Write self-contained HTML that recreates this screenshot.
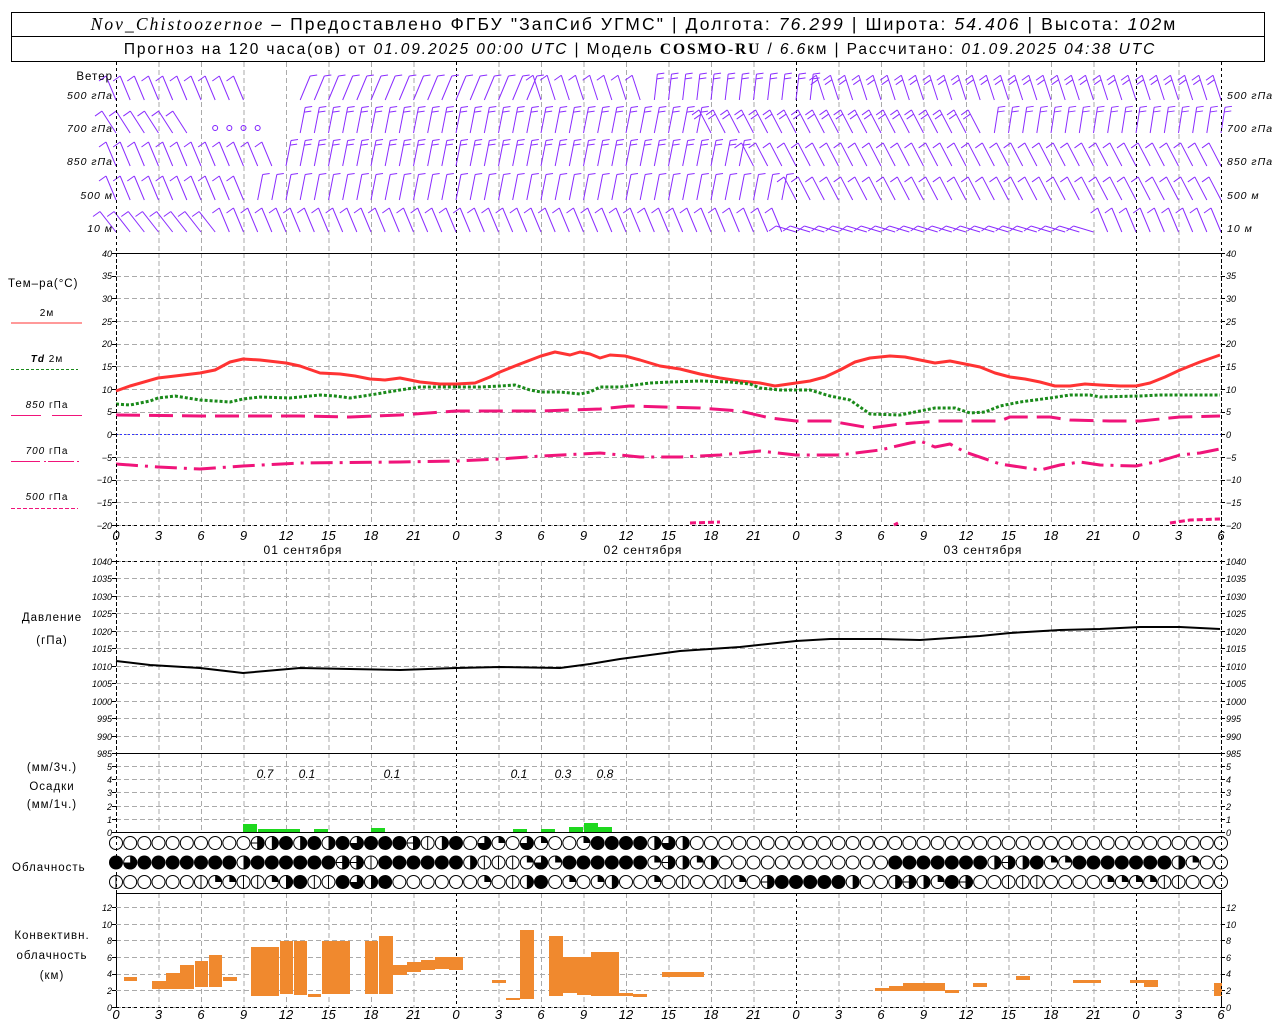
<!DOCTYPE html>
<html><head><meta charset="utf-8"><style>
body{margin:0;background:#fff;width:1280px;height:1024px;overflow:hidden}
svg{display:block}
text{font-family:"Liberation Sans",sans-serif;fill:#000}
.t{font-size:10px;font-style:italic}
.l{font-size:11.5px;letter-spacing:1px}
</style></head><body>
<svg id="s" width="1280" height="1024" xmlns="http://www.w3.org/2000/svg">
<rect x="11.5" y="12.5" width="1253" height="49" fill="none" stroke="#000"/>
<line x1="11" y1="36.5" x2="1265" y2="36.5" stroke="#000"/>
<text x="634" y="30" text-anchor="middle" style="font-size:17.5px;letter-spacing:2.1px"><tspan font-style="italic" font-family="Liberation Serif">Nov_Chistoozernoe</tspan> – Предоставлено ФГБУ "ЗапСиб УГМС" | Долгота: <tspan font-style="italic">76.299</tspan> | Широта: <tspan font-style="italic">54.406</tspan> | Высота: <tspan font-style="italic">102</tspan>м</text>
<text x="640" y="54" text-anchor="middle" style="font-size:15.5px;letter-spacing:1.9px">Прогноз на 120 часа(ов) от <tspan font-style="italic">01.09.2025 00:00 UTC</tspan> | Модель <tspan font-weight="bold" font-family="Liberation Serif">COSMO-RU</tspan> / <tspan font-style="italic">6.6</tspan>км | Рассчитано: <tspan font-style="italic">01.09.2025 04:38 UTC</tspan></text>
<g id="g"></g>
<g class="l">
<text x="113" y="80" text-anchor="end">Ветер</text>
<text x="113" y="99" text-anchor="end" class="t" style="font-size:10.5px">500 гПа</text>
<text x="113" y="132" text-anchor="end" class="t" style="font-size:10.5px">700 гПа</text>
<text x="113" y="165" text-anchor="end" class="t" style="font-size:10.5px">850 гПа</text>
<text x="113" y="199" text-anchor="end" class="t" style="font-size:10.5px">500 м</text>
<text x="113" y="232" text-anchor="end" class="t" style="font-size:10.5px">10  м</text>
<text x="1227" y="99" class="t" style="font-size:10.5px">500 гПа</text>
<text x="1227" y="132" class="t" style="font-size:10.5px">700 гПа</text>
<text x="1227" y="165" class="t" style="font-size:10.5px">850 гПа</text>
<text x="1227" y="199" class="t" style="font-size:10.5px">500 м</text>
<text x="1227" y="232" class="t" style="font-size:10.5px">10  м</text>
<text x="8" y="287">Тем–ра(°С)</text>
<text x="47" y="316" text-anchor="middle" style="font-size:10px">2м</text>
<text x="47" y="362" text-anchor="middle" style="font-size:10px"><tspan font-style="italic" font-weight="bold">Td</tspan>  2м</text>
<text x="47" y="408" text-anchor="middle" style="font-size:10px"><tspan font-style="italic">850</tspan> гПа</text>
<text x="47" y="454" text-anchor="middle" style="font-size:10px"><tspan font-style="italic">700</tspan> гПа</text>
<text x="47" y="500" text-anchor="middle" style="font-size:10px"><tspan font-style="italic">500</tspan> гПа</text>
<text x="52" y="621" text-anchor="middle">Давление</text>
<text x="52" y="644" text-anchor="middle">(гПа)</text>
<text x="52" y="771" text-anchor="middle">(мм/3ч.)</text>
<text x="52" y="790" text-anchor="middle">Осадки</text>
<text x="52" y="808" text-anchor="middle">(мм/1ч.)</text>
<text x="12" y="871">Облачность</text>
<text x="52" y="939" text-anchor="middle">Конвективн.</text>
<text x="52" y="959" text-anchor="middle">облачность</text>
<text x="52" y="979" text-anchor="middle">(км)</text>
<text x="303" y="554" text-anchor="middle" style="font-size:12px">01 сентября</text>
<text x="643" y="554" text-anchor="middle" style="font-size:12px">02 сентября</text>
<text x="983" y="554" text-anchor="middle" style="font-size:12px">03 сентября</text>
</g>
<g class="t" style="font-size:13px" text-anchor="middle">
<text x="116" y="540">0</text><text x="158.5" y="540">3</text><text x="201" y="540">6</text><text x="243.5" y="540">9</text><text x="286" y="540">12</text><text x="328.5" y="540">15</text><text x="371" y="540">18</text><text x="413.5" y="540">21</text><text x="456" y="540">0</text><text x="498.5" y="540">3</text><text x="541" y="540">6</text><text x="583.5" y="540">9</text><text x="626" y="540">12</text><text x="668.5" y="540">15</text><text x="711" y="540">18</text><text x="753.5" y="540">21</text><text x="796" y="540">0</text><text x="838.5" y="540">3</text><text x="881" y="540">6</text><text x="923.5" y="540">9</text><text x="966" y="540">12</text><text x="1008.5" y="540">15</text><text x="1051" y="540">18</text><text x="1093.5" y="540">21</text><text x="1136" y="540">0</text><text x="1178.5" y="540">3</text><text x="1221" y="540">6</text>
<text x="116" y="1019">0</text><text x="158.5" y="1019">3</text><text x="201" y="1019">6</text><text x="243.5" y="1019">9</text><text x="286" y="1019">12</text><text x="328.5" y="1019">15</text><text x="371" y="1019">18</text><text x="413.5" y="1019">21</text><text x="456" y="1019">0</text><text x="498.5" y="1019">3</text><text x="541" y="1019">6</text><text x="583.5" y="1019">9</text><text x="626" y="1019">12</text><text x="668.5" y="1019">15</text><text x="711" y="1019">18</text><text x="753.5" y="1019">21</text><text x="796" y="1019">0</text><text x="838.5" y="1019">3</text><text x="881" y="1019">6</text><text x="923.5" y="1019">9</text><text x="966" y="1019">12</text><text x="1008.5" y="1019">15</text><text x="1051" y="1019">18</text><text x="1093.5" y="1019">21</text><text x="1136" y="1019">0</text><text x="1178.5" y="1019">3</text><text x="1221" y="1019">6</text>
</g>
<g class="t" text-anchor="end" style="font-size:9px">
<text x="112" y="257">40</text><text x="112" y="279">35</text><text x="112" y="302">30</text><text x="112" y="325">25</text><text x="112" y="347">20</text><text x="112" y="370">15</text><text x="112" y="393">10</text><text x="112" y="415">5</text><text x="112" y="438">0</text><text x="112" y="461">−5</text><text x="112" y="483">−10</text><text x="112" y="506">−15</text><text x="112" y="529">−20</text>
<text x="112" y="565">1040</text><text x="112" y="582">1035</text><text x="112" y="600">1030</text><text x="112" y="617">1025</text><text x="112" y="635">1020</text><text x="112" y="652">1015</text><text x="112" y="670">1010</text><text x="112" y="687">1005</text><text x="112" y="705">1000</text><text x="112" y="722">995</text><text x="112" y="740">990</text><text x="112" y="757">985</text>
<text x="112" y="770">5</text><text x="112" y="783">4</text><text x="112" y="796">3</text><text x="112" y="810">2</text><text x="112" y="823">1</text><text x="112" y="836">0</text>
<text x="112" y="911">12</text><text x="112" y="928">10</text><text x="112" y="944">8</text><text x="112" y="961">6</text><text x="112" y="977">4</text><text x="112" y="994">2</text><text x="112" y="1011">0</text>
</g>
<g class="t" style="font-size:9px">
<text x="1226" y="257">40</text><text x="1226" y="279">35</text><text x="1226" y="302">30</text><text x="1226" y="325">25</text><text x="1226" y="347">20</text><text x="1226" y="370">15</text><text x="1226" y="393">10</text><text x="1226" y="415">5</text><text x="1226" y="438">0</text><text x="1226" y="461">−5</text><text x="1226" y="483">−10</text><text x="1226" y="506">−15</text><text x="1226" y="529">−20</text>
<text x="1226" y="565">1040</text><text x="1226" y="582">1035</text><text x="1226" y="600">1030</text><text x="1226" y="617">1025</text><text x="1226" y="635">1020</text><text x="1226" y="652">1015</text><text x="1226" y="670">1010</text><text x="1226" y="687">1005</text><text x="1226" y="705">1000</text><text x="1226" y="722">995</text><text x="1226" y="740">990</text><text x="1226" y="757">985</text>
<text x="1226" y="770">5</text><text x="1226" y="783">4</text><text x="1226" y="796">3</text><text x="1226" y="810">2</text><text x="1226" y="823">1</text><text x="1226" y="836">0</text>
<text x="1226" y="911">12</text><text x="1226" y="928">10</text><text x="1226" y="944">8</text><text x="1226" y="961">6</text><text x="1226" y="977">4</text><text x="1226" y="994">2</text><text x="1226" y="1011">0</text>
</g>
<g class="t" style="font-size:12px" text-anchor="middle">
<text x="265" y="778">0.7</text><text x="307" y="778">0.1</text><text x="392" y="778">0.1</text><text x="519" y="778">0.1</text><text x="563" y="778">0.3</text><text x="605" y="778">0.8</text>
</g>
</svg>
<script>
var g=document.getElementById('g'),NS='http://www.w3.org/2000/svg';
function el(t,a){var e=document.createElementNS(NS,t);for(var k in a)e.setAttribute(k,a[k]);g.appendChild(e);return e}
function L(x1,y1,x2,y2,c,w,d){var a={x1:x1,y1:y1,x2:x2,y2:y2,stroke:c||'#000','stroke-width':w||1};if(d)a['stroke-dasharray']=d;el('line',a)}
var X0=116,P=340/24;
L(11,323,82,323,'#f33',1);L(11,369.5,78,369.5,'#1a8a1a',1,'3,2');L(11,415.5,41,415.5,'#f0147a',1);L(52,415.5,82,415.5,'#f0147a',1);
L(11,461.5,40,461.5,'#f0147a',1);L(44,461.5,46,461.5,'#f0147a',1);L(48,461.5,74,461.5,'#f0147a',1);L(77,461.5,79,461.5,'#f0147a',1);
L(11,508.5,78,508.5,'#f0147a',1,'4,2');
var panels=[[62,253],[253,525],[561,753],[753,832],[893,1007]];
for(var i=0;i<=26;i++){var x=X0+42.5*i+0.5,day=(i%8==0)||i==26;
 panels.forEach(function(p){L(x,p[0],x,p[1],day?'#000':'#aaa',1,day?'3,3':'5,3')});}
function hg(y0,y1,n){for(var k=0;k<=n;k++){var y=Math.round(y0+(y1-y0)*k/n)+0.5;L(116,y,1221,y,'#aaa',1,'5,3');L(112,y,116,y,'#000');L(1221,y,1225,y,'#000')}}
hg(253,525,12);hg(561,753,11);hg(766,832,5);hg(907,1007,6);
L(116,253.5,1221,253.5,'#000');L(116,561.5,1221,561.5,'#000',1,'3,3');L(116,753.5,1221,753.5,'#000');L(116,832.5,1221,832.5,'#000');L(116,893.5,1221,893.5,'#000');L(116,1007.5,1221,1007.5,'#000',1,'3,3');L(116,525.5,1221,525.5,'#000',1,'3,3');
L(116,434.5,1221,434.5,'#33f',1,'2,2');
function pl(pts,c,w,d){var s=pts.map(function(p){return p.join(',')}).join(' ');var a={points:s,fill:'none',stroke:c,'stroke-width':w,'stroke-linejoin':'round'};if(d)a['stroke-dasharray']=d;el('polyline',a)}
pl([[116,391],[130,386],[158,378],[175,376],[200,373],[215,370],[230,362],[243,359],[260,360],[286,363],[300,366],[320,373],[340,374],[355,376],[370,379],[385,380],[400,378],[420,382],[440,384],[456,384],[475,383],[490,377],[500,372],[520,364],[541,356],[555,352],[570,355],[580,352],[590,354],[600,358],[610,355],[625,356],[640,360],[660,366],[680,369],[700,374],[720,378],[740,381],[760,383],[775,386],[796,383],[810,381],[825,377],[840,370],[855,362],[870,358],[890,356],[905,357],[920,360],[935,363],[950,361],[965,364],[980,367],[995,373],[1010,377],[1025,379],[1040,382],[1055,386],[1070,386],[1085,384],[1100,385],[1120,386],[1136,386],[1150,383],[1165,377],[1180,370],[1200,362],[1220,355]],'#f33',3);
pl([[116,404],[130,405],[150,401],[158,398],[175,396],[200,400],[230,402],[243,399],[260,397],[290,398],[320,395],[335,396],[350,398],[370,395],[400,390],[420,387],[456,387],[480,387],[500,386],[515,385],[530,390],[541,392],[560,392],[580,394],[590,392],[600,387],[620,387],[650,383],[670,382],[700,381],[730,382],[750,384],[760,388],[780,390],[810,390],[830,396],[850,400],[870,414],[900,415],[915,412],[935,408],[955,408],[970,413],[985,412],[1000,406],[1020,402],[1050,398],[1070,395],[1090,395],[1100,397],[1140,396],[1160,395],[1200,395],[1220,395]],'#1a8a1a',3,'3,2');
pl([[116,415],[200,416],[300,416],[350,417],[400,415],[456,411],[540,411],[600,409],[630,406],[700,408],[740,411],[770,418],[796,421],[830,421],[870,428],[900,424],[940,421],[1000,421],[1010,417],[1050,417],[1070,420],[1110,421],[1140,421],[1180,417],[1220,416]],'#f0147a',3,'24,9');
pl([[116,464],[158,467],[200,469],[243,466],[300,463],[400,462],[456,461],[500,459],[541,456],[600,453],[640,457],[680,457],[720,455],[760,451],[796,455],[840,455],[880,450],[910,443],[920,441],[935,447],[950,444],[965,452],[1000,464],[1040,470],[1060,465],[1080,462],[1100,465],[1136,466],[1160,461],[1180,455],[1200,453],[1220,449]],'#f0147a',3,'22,7,3,7');
pl([[690,523],[720,522]],'#f0147a',3,'6,3');pl([[894,525],[898,523]],'#f0147a',3);pl([[1170,523],[1190,520],[1220,519]],'#f0147a',3,'6,3');
pl([[116,661],[150,665],[200,668],[243,673],[300,668],[350,669],[400,670],[456,668],[500,667],[560,668],[590,664],[620,659],[680,651],[740,647],[796,641],[830,639],[880,639],[920,640],[980,636],[1010,633],[1060,630],[1100,629],[1140,627],[1180,627],[1220,629]],'#000',2);
[[243,257,824],[258,272,829],[272,300,829],[314,328,829],[371,385,828],[513,527,829],[541,555,829],[569,583,827],[584,598,823],[598,612,827]].forEach(function(b){el('rect',{x:b[0],y:b[2],width:b[1]-b[0],height:832-b[2],fill:'#1ed81e'})});
[[124,137,977,981],[152,166,981,989],[166,180,973,989],[180,194,965,989],[195,208,961,987],[209,222,955,987],[223,237,977,981],[251,279,947,996],[280,293,941,994],[294,307,941,995],[308,321,994,997],[322,350,941,994],[365,378,941,994],[379,393,936,994],[393,407,965,975],[407,421,962,972],[421,435,960,970],[435,449,957,969],[449,463,957,970],[492,506,980,983],[506,520,998,1000],[520,534,930,999],[549,563,936,996],[563,577,957,993],[577,591,957,995],[591,605,952,996],[605,619,952,996],[619,633,993,996],[633,647,994,997],[662,704,972,977],[875,889,988,991],[889,903,986,991],[903,945,983,991],[945,959,990,993],[973,987,983,987],[1016,1030,976,980],[1073,1101,980,983],[1130,1144,980,983],[1144,1158,980,987],[1214,1222,983,996]].forEach(function(b){el('rect',{x:b[0],y:b[2],width:b[1]-b[0],height:b[3]-b[2],fill:'#f0892e'})});
var rows=[
'OOOOOOOOOOhbFbFbFtFFFhvbFOtqOtqOOqFFFFbtbOOOOOOOOOOOOOOOOOOOOOOOOOOOOOOOOOOOOOOO',
'FtFFFFFFFbFFFFFFhhvFFFFFFbvvvqtqFFFFFFqhbqbOOOOOOOOOOOOFFFFFFFbhbFqqFFFFFFFbqOO',
'vOOOOOvqqvvqbFvvFtbFOOOOOOqOvbFOqOqbOOqOvOOvqOhFFFFFbOObhbqFhOOvvvOOOOqqqqvvOOOv'];
rows.forEach(function(r,ri){var y=843+ri*19.5;for(var i=0;i<79;i++){var c=r[i]||'O',x=X0+i*P;
 var cx=x,R=7;
 if(c=='F'){el('circle',{cx:cx,cy:y,r:R,fill:'#000'});continue}
 el('circle',{cx:cx,cy:y,r:R-0.5,fill:'#fff',stroke:'#000','stroke-width':1});
 if(c=='b')el('path',{d:'M'+cx+','+(y-R)+'A'+R+','+R+' 0 0 1 '+cx+','+(y+R)+'Z',fill:'#000'});
 if(c=='v'){L(cx,y-R,cx,y+R,'#000',1)}
 if(c=='h'){L(cx,y-R,cx,y+R,'#000',1);L(cx-R,y,cx+R,y,'#000',1);el('path',{d:'M'+cx+','+(y-R)+'A'+R+','+R+' 0 0 1 '+cx+','+(y+R)+'Z',fill:'#000'})}
 if(c=='q')el('path',{d:'M'+cx+','+y+'L'+cx+','+(y-R)+'A'+R+','+R+' 0 0 1 '+(cx+R)+','+y+'Z',fill:'#000'});
 if(c=='t')el('path',{d:'M'+cx+','+y+'L'+cx+','+(y-R)+'A'+R+','+R+' 0 1 1 '+(cx-R)+','+y+'Z',fill:'#000'});
}});
var bases=[100,133,166,200,232];
function cfg(r,h){
 if(r==0){if(h<10)return[-10,-1,1];if(h<13)return null;if(h<30)return[10,1,1];if(h<38)return[-8,-1,1];if(h<50)return[3,1,2];return[-8,-1,2]}
 if(r==1){if(h<6)return[-14,-1,1];if(h<13)return null;if(h<42)return[5,1,2];if(h<62)return[-12,-1,2];return[4,1,2]}
 if(r==2){if(h<12)return[-10,-1,1];if(h<45)return[5,1,2];return[-12,-1,1]}
 if(r==3){if(h<10)return[-10,-1,1];if(h<48)return[5,1,1];return[-12,-1,1]}
 if(h<8)return[-16,-1,1];if(h<48)return[-10,-1,1];if(h<70)return[-20,-1,1];return[-10,-1,1]}
for(var r=0;r<5;r++)for(var h=0;h<=78;h++){var c=cfg(r,h);var x=X0+h*P,yb=bases[r];
 if(!c){if(h>=7&&h<11&&r==1)el('circle',{cx:x,cy:yb-5,r:2.5,fill:'none',stroke:'#7f1fff'});continue}
 var len=26,dx=c[0],dy=Math.sqrt(Math.max(len*len-dx*dx,16));if(r==4&&h>=48&&h<70)dy=6;
 var tx=x+dx,ty=yb-dy;L(x,yb,tx,ty,'#8a2cff',1);
 for(var k=0;k<c[2];k++){var fx=tx-dx*k*0.18,fy=ty+dy*k*0.18;L(fx,fy,fx+c[1]*7,fy+(c[1]>0?-1:5),'#8a2cff',1)}}
L(116.5,62,116.5,1007,'#000',1,'3,3');L(1221.5,62,1221.5,1007,'#000',1,'3,3');
</script>
</body></html>
